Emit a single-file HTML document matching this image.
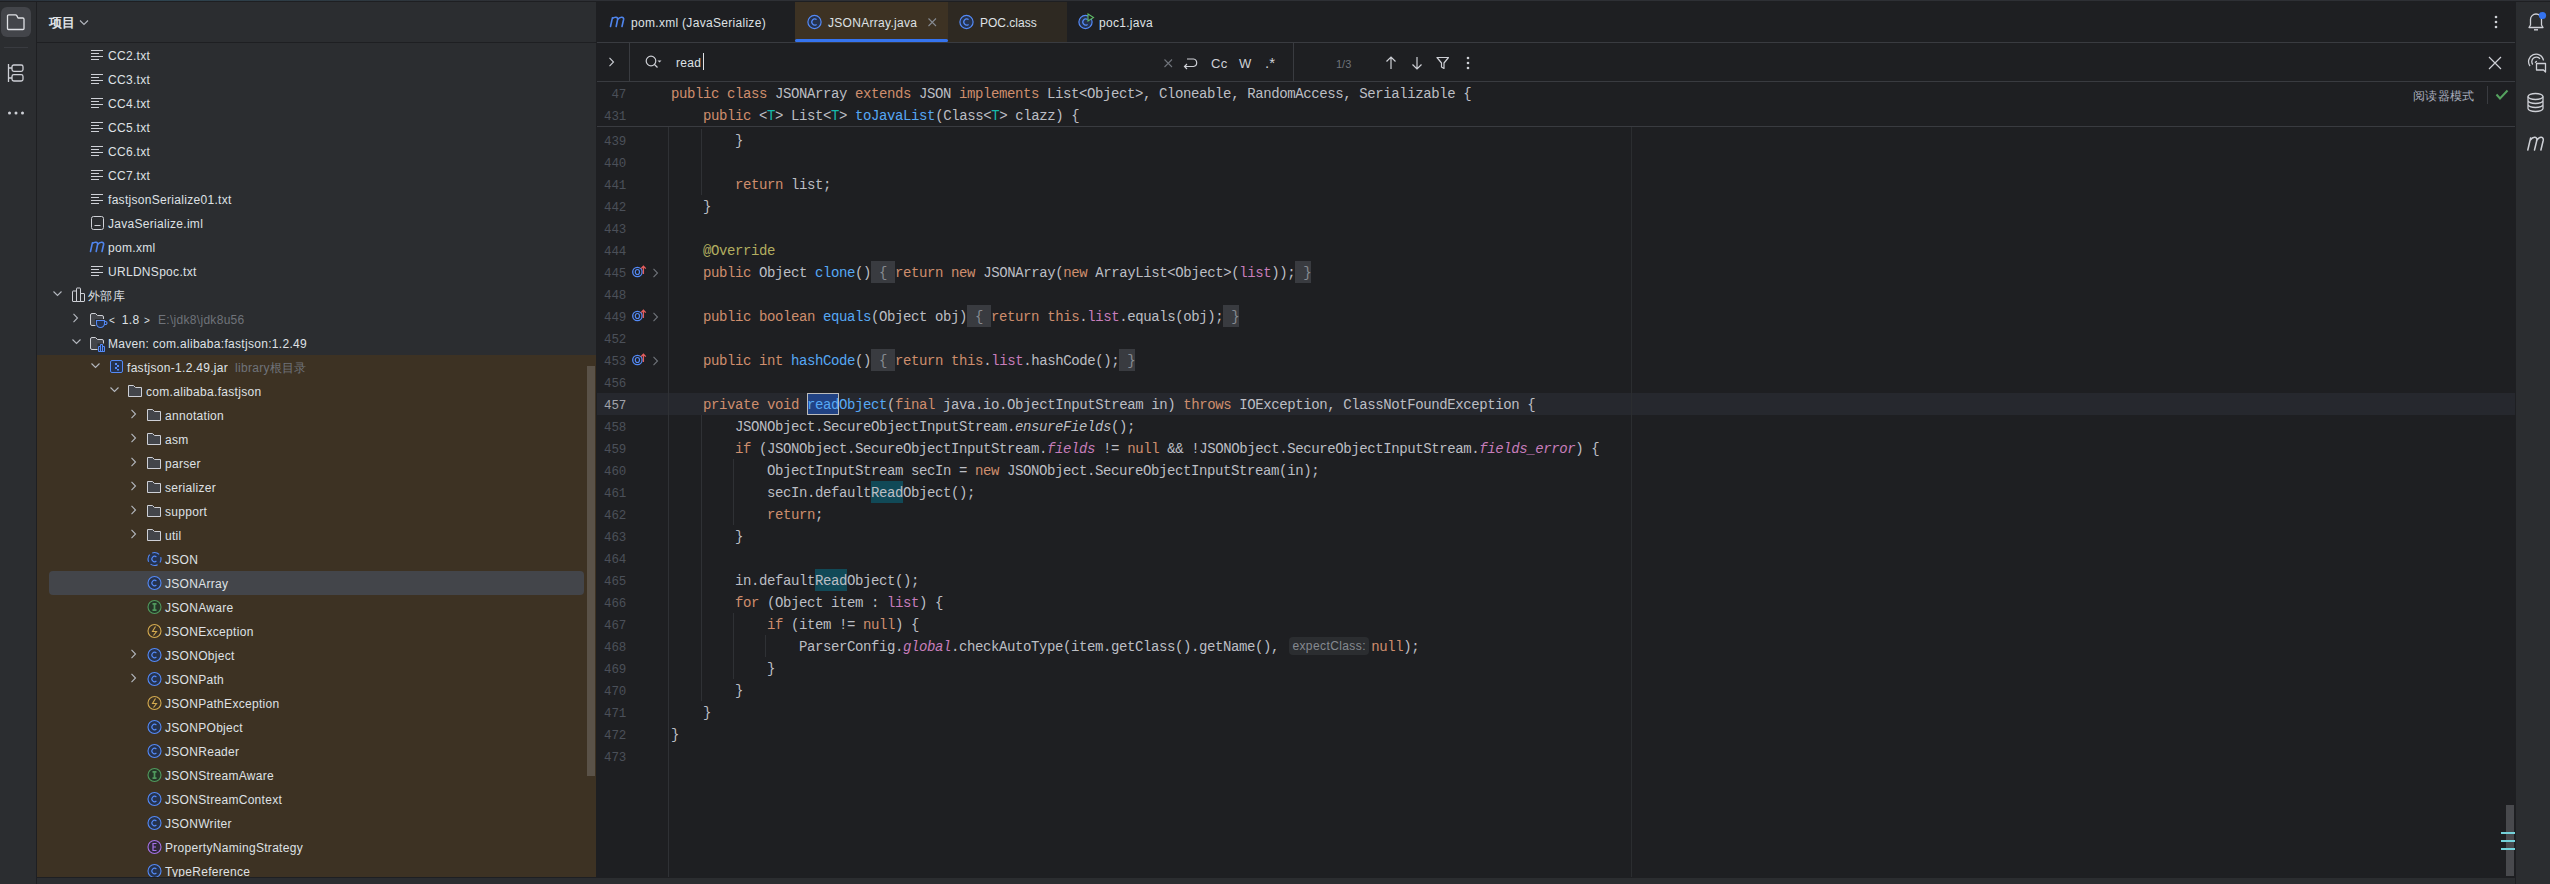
<!DOCTYPE html>
<html><head><meta charset="utf-8">
<style>
*{margin:0;padding:0;box-sizing:border-box}
html,body{width:2550px;height:884px;overflow:hidden;background:#2b2d30}
body{position:relative;font-family:"Liberation Sans",sans-serif;font-size:13px;color:#dfe1e5}
.abs{position:absolute}
.ic{position:absolute;overflow:visible}
.tt{position:absolute;height:24px;line-height:24px;padding-top:1px;white-space:pre;color:#dfe1e5;font-size:12px;letter-spacing:0.3px}
.gray{color:#6f737a}
.mvn{font-family:"Liberation Sans",sans-serif;font-style:italic;font-size:20px;color:#548af7;line-height:20px;letter-spacing:-1px}
.ln{position:absolute;left:586px;width:40px;text-align:right;height:22px;line-height:22px;padding-top:2px;font-family:"Liberation Mono",monospace;font-size:12.5px;letter-spacing:-0.2px;color:#4b5059}
.ln.cur{color:#a1a3ab}
.cl{position:absolute;left:671px;height:22px;line-height:22px;padding-top:1px;font-family:"Liberation Mono",monospace;font-size:14px;letter-spacing:-0.4px;color:#bcbec4;white-space:pre}
.fold{display:inline-block;position:relative;top:-1px;padding-top:1px;background:#393b40;color:#868a91;height:22px;vertical-align:top}
.hint{display:inline-block;position:relative;top:1px;width:80px;text-align:center;background:#2b2d30;color:#868a91;font-family:"Liberation Sans",sans-serif;font-size:12px;letter-spacing:0.4px;height:18px;line-height:18px;border-radius:4px;padding:0;margin:0 2px 0 2px;vertical-align:top}
.m1{display:inline-block;position:relative;top:-1px;padding-top:1px;color:#56a8f5;background:#214283;outline:1px solid #bbbbbb;outline-offset:-1px;height:22px;vertical-align:top}
.m2{display:inline-block;position:relative;top:-1px;padding-top:1px;background:#114957;height:22px;vertical-align:top}
.guide{position:absolute;width:1px;background:#2f3135}
</style></head><body>
<!-- top line -->
<div class="abs" style="left:0;top:0;width:2550px;height:1px;background:linear-gradient(90deg,#2b3038 0%,#2e4450 6%,#2e3035 20%,#2e3035 100%)"></div>
<div class="abs" style="left:0;top:1px;width:2550px;height:1px;background:#1e1f22"></div>

<!-- left strip -->
<div class="abs" style="left:0;top:2px;width:36px;height:882px;background:#2b2d30"></div>
<div class="abs" style="left:36px;top:2px;width:1px;height:882px;background:#1e1f22"></div>
<div class="abs" style="left:1px;top:7px;width:30px;height:30px;border-radius:6px;background:#43454a"></div>
<svg class="ic" style="left:6px;top:13px" width="20" height="18"><path d="M1.5 15.5 V3 Q1.5 1.8 2.7 1.8 H9.5 Q10.3 1.8 10.8 2.6 L12 5 H16.8 Q18 5 18 6.2 V15.5 Q18 16.5 17 16.5 H2.5 Q1.5 16.5 1.5 15.5 Z" fill="none" stroke="#dfe1e5" stroke-width="1.3" stroke-linejoin="round"/></svg>
<div class="abs" style="left:4px;top:47px;width:24px;height:1px;background:#393b40"></div>
<svg class="ic" style="left:7px;top:63px" width="20" height="20"><path d="M1.5 1 V19 M1.5 5 H5 M1.5 15 H5" fill="none" stroke="#ced0d6" stroke-width="1.3"/><rect x="5" y="2" width="11" height="6.3" rx="1.8" fill="none" stroke="#ced0d6" stroke-width="1.3"/><rect x="5" y="11.7" width="11" height="6.3" rx="1.8" fill="none" stroke="#ced0d6" stroke-width="1.3"/></svg>
<svg class="ic" style="left:7px;top:110px" width="20" height="6"><circle cx="2.5" cy="3" r="1.5" fill="#ced0d6"/><circle cx="9" cy="3" r="1.5" fill="#ced0d6"/><circle cx="15.5" cy="3" r="1.5" fill="#ced0d6"/></svg>

<!-- project panel -->
<div class="abs" style="left:37px;top:2px;width:559px;height:40px;background:#2b2d30"></div>
<div class="abs" style="left:49px;top:11px;height:24px;line-height:24px;font-size:13px;color:#dfe1e5;font-weight:bold">项目</div>
<svg class="ic" style="left:79px;top:19px" width="11" height="8"><path d="M1 1.5 L5 5.5 L9 1.5" fill="none" stroke="#b4b8bf" stroke-width="1.1"/></svg>
<div class="abs" style="left:37px;top:42px;width:559px;height:1px;background:#1e1f22"></div>
<div class="abs" style="left:37px;top:43px;width:559px;height:312px;background:#2b2d30"></div>
<div class="abs" style="left:37px;top:355px;width:559px;height:522px;background:#3d3223"></div>
<div class="abs" style="left:49px;top:571px;width:535px;height:24px;border-radius:4px;background:#43454a"></div>
<div class="abs" style="left:587px;top:366px;width:8px;height:410px;background:#5a5248"></div>
<svg class="ic" style="left:91px;top:47px" width="16" height="16"><g stroke="#ced0d6" stroke-width="1"><line x1="0" y1="3.5" x2="12" y2="3.5"/><line x1="0" y1="6.5" x2="8" y2="6.5"/><line x1="0" y1="9.5" x2="12" y2="9.5"/><line x1="0" y1="12.5" x2="8" y2="12.5"/></g></svg><div class="tt" style="left:108px;top:43px">CC2.txt</div><svg class="ic" style="left:91px;top:71px" width="16" height="16"><g stroke="#ced0d6" stroke-width="1"><line x1="0" y1="3.5" x2="12" y2="3.5"/><line x1="0" y1="6.5" x2="8" y2="6.5"/><line x1="0" y1="9.5" x2="12" y2="9.5"/><line x1="0" y1="12.5" x2="8" y2="12.5"/></g></svg><div class="tt" style="left:108px;top:67px">CC3.txt</div><svg class="ic" style="left:91px;top:95px" width="16" height="16"><g stroke="#ced0d6" stroke-width="1"><line x1="0" y1="3.5" x2="12" y2="3.5"/><line x1="0" y1="6.5" x2="8" y2="6.5"/><line x1="0" y1="9.5" x2="12" y2="9.5"/><line x1="0" y1="12.5" x2="8" y2="12.5"/></g></svg><div class="tt" style="left:108px;top:91px">CC4.txt</div><svg class="ic" style="left:91px;top:119px" width="16" height="16"><g stroke="#ced0d6" stroke-width="1"><line x1="0" y1="3.5" x2="12" y2="3.5"/><line x1="0" y1="6.5" x2="8" y2="6.5"/><line x1="0" y1="9.5" x2="12" y2="9.5"/><line x1="0" y1="12.5" x2="8" y2="12.5"/></g></svg><div class="tt" style="left:108px;top:115px">CC5.txt</div><svg class="ic" style="left:91px;top:143px" width="16" height="16"><g stroke="#ced0d6" stroke-width="1"><line x1="0" y1="3.5" x2="12" y2="3.5"/><line x1="0" y1="6.5" x2="8" y2="6.5"/><line x1="0" y1="9.5" x2="12" y2="9.5"/><line x1="0" y1="12.5" x2="8" y2="12.5"/></g></svg><div class="tt" style="left:108px;top:139px">CC6.txt</div><svg class="ic" style="left:91px;top:167px" width="16" height="16"><g stroke="#ced0d6" stroke-width="1"><line x1="0" y1="3.5" x2="12" y2="3.5"/><line x1="0" y1="6.5" x2="8" y2="6.5"/><line x1="0" y1="9.5" x2="12" y2="9.5"/><line x1="0" y1="12.5" x2="8" y2="12.5"/></g></svg><div class="tt" style="left:108px;top:163px">CC7.txt</div><svg class="ic" style="left:91px;top:191px" width="16" height="16"><g stroke="#ced0d6" stroke-width="1"><line x1="0" y1="3.5" x2="12" y2="3.5"/><line x1="0" y1="6.5" x2="8" y2="6.5"/><line x1="0" y1="9.5" x2="12" y2="9.5"/><line x1="0" y1="12.5" x2="8" y2="12.5"/></g></svg><div class="tt" style="left:108px;top:187px">fastjsonSerialize01.txt</div><svg class="ic" style="left:91px;top:215px" width="16" height="16"><rect x="0.5" y="1.5" width="12" height="13" rx="2" fill="none" stroke="#ced0d6"/><line x1="3.5" y1="10.5" x2="9.5" y2="10.5" stroke="#ced0d6"/></svg><div class="tt" style="left:108px;top:211px">JavaSerialize.iml</div><svg class="ic" style="left:89px;top:241px" width="17" height="13"><path d="M1.5 10.5 L3.4 1.8 M3.2 2.8 Q5 1 7 1.2 Q9 1.5 8.6 3.5 L7.2 10.5 M8.6 3.5 Q10.5 1 12.8 1.2 Q15 1.5 14.6 3.5 L13 10.5" fill="none" stroke="#4f85ee" stroke-width="1.6" stroke-linecap="round" stroke-linejoin="round"/></svg><div class="tt" style="left:108px;top:235px">pom.xml</div><svg class="ic" style="left:91px;top:263px" width="16" height="16"><g stroke="#ced0d6" stroke-width="1"><line x1="0" y1="3.5" x2="12" y2="3.5"/><line x1="0" y1="6.5" x2="8" y2="6.5"/><line x1="0" y1="9.5" x2="12" y2="9.5"/><line x1="0" y1="12.5" x2="8" y2="12.5"/></g></svg><div class="tt" style="left:108px;top:259px">URLDNSpoc.txt</div><svg class="ic" style="left:53px;top:290px" width="10" height="8"><path d="M0.5 1.5 L4.5 5.5 L8.5 1.5" fill="none" stroke="#b4b8bf" stroke-width="1.1"/></svg><svg class="ic" style="left:72px;top:287px" width="16" height="16"><path d="M1 14.5 Q0.5 14.5 0.5 14 V4.5 Q0.5 4 1 4 H4.5 V14.5 Z M4.5 14.5 V1.5 Q4.5 1 5 1 H8 Q8.5 1 8.5 1.5 V14.5 Z M8.5 14.5 V6.5 H12 Q12.5 6.5 12.5 7 V14 Q12.5 14.5 12 14.5 Z" fill="none" stroke="#ced0d6"/></svg><div class="tt" style="left:88px;top:283px">外部库</div><svg class="ic" style="left:72px;top:313px" width="8" height="11"><path d="M1.5 0.8 L5.5 5 L1.5 9.2" fill="none" stroke="#b4b8bf" stroke-width="1.1"/></svg><svg class="ic" style="left:90px;top:312px" width="17" height="17"><path d="M2 13.5 Q0.5 13.5 0.5 12 V3 Q0.5 1.5 2 1.5 H5.5 L7.5 3.5 H12 Q13.5 3.5 13.5 5 V12 Q13.5 13.5 12 13.5 Z" fill="#43454a" stroke="#ced0d6" stroke-width="1"/><path d="M6.5 8.5 H14.5 V11.5 A4 4 0 0 1 6.5 11.5 Z" fill="#2b2d30" stroke="#2b2d30" stroke-width="3"/><path d="M6.5 8.5 H14.5 V11.5 A4 4 0 0 1 6.5 11.5 Z" fill="#25324d" stroke="#548af7" stroke-width="1.1"/><path d="M14.5 9.5 H15.5 A1.5 1.5 0 0 1 15.5 12.5 H14" fill="none" stroke="#548af7" stroke-width="1.1"/></svg><div class="tt" style="left:109px;top:307px"><span style="font-size:10px;margin-right:3px">&lt;</span> 1.8 <span style="font-size:10px;margin-left:1px">&gt;</span></div><div class="tt gray" style="left:158px;top:307px">E:\jdk8\jdk8u56</div><svg class="ic" style="left:72px;top:338px" width="10" height="8"><path d="M0.5 1.5 L4.5 5.5 L8.5 1.5" fill="none" stroke="#b4b8bf" stroke-width="1.1"/></svg><svg class="ic" style="left:90px;top:336px" width="17" height="17"><path d="M2 13.5 Q0.5 13.5 0.5 12 V3 Q0.5 1.5 2 1.5 H5.5 L7.5 3.5 H12 Q13.5 3.5 13.5 5 V12 Q13.5 13.5 12 13.5 Z" fill="#43454a" stroke="#ced0d6" stroke-width="1"/><rect x="7.5" y="7.5" width="8" height="9" fill="#2b2d30"/><path d="M8.5 15.5 V10.5 H10.5 V15.5 M10.5 15.5 V8.5 H12.5 V15.5 M12.5 15.5 V10.5 H14.5 V15.5 Z M8.5 15.5 H14.5" fill="#25324d" stroke="#548af7"/></svg><div class="tt" style="left:108px;top:331px">Maven: com.alibaba:fastjson:1.2.49</div><svg class="ic" style="left:91px;top:362px" width="10" height="8"><path d="M0.5 1.5 L4.5 5.5 L8.5 1.5" fill="none" stroke="#b4b8bf" stroke-width="1.1"/></svg><svg class="ic" style="left:110px;top:359px" width="16" height="16"><rect x="0.5" y="1.5" width="12" height="12" rx="1.5" fill="#25324d" stroke="#548af7"/><g fill="#548af7"><rect x="5" y="4" width="2" height="2"/><rect x="7" y="6" width="2" height="2"/><rect x="5" y="8" width="2" height="2"/><rect x="7" y="10" width="2" height="1.5"/></g></svg><div class="tt" style="left:127px;top:355px">fastjson-1.2.49.jar</div><div class="tt gray" style="left:235px;top:355px">library根目录</div><svg class="ic" style="left:110px;top:386px" width="10" height="8"><path d="M0.5 1.5 L4.5 5.5 L8.5 1.5" fill="none" stroke="#b4b8bf" stroke-width="1.1"/></svg><svg class="ic" style="left:128px;top:383px" width="16" height="16"><path d="M0.5 13.5 V2.5 H5.5 L7.5 4.5 H13.5 V13.5 Z" fill="#43454a" stroke="#ced0d6" stroke-linejoin="round"/><line x1="0.5" y1="5.5" x2="13.5" y2="5.5" stroke="#ced0d6" stroke-width="0"/></svg><div class="tt" style="left:146px;top:379px">com.alibaba.fastjson</div><svg class="ic" style="left:130px;top:409px" width="8" height="11"><path d="M1.5 0.8 L5.5 5 L1.5 9.2" fill="none" stroke="#b4b8bf" stroke-width="1.1"/></svg><svg class="ic" style="left:147px;top:407px" width="16" height="16"><path d="M0.5 13.5 V2.5 H5.5 L7.5 4.5 H13.5 V13.5 Z" fill="#43454a" stroke="#ced0d6" stroke-linejoin="round"/><line x1="0.5" y1="5.5" x2="13.5" y2="5.5" stroke="#ced0d6" stroke-width="0"/></svg><div class="tt" style="left:165px;top:403px">annotation</div><svg class="ic" style="left:130px;top:433px" width="8" height="11"><path d="M1.5 0.8 L5.5 5 L1.5 9.2" fill="none" stroke="#b4b8bf" stroke-width="1.1"/></svg><svg class="ic" style="left:147px;top:431px" width="16" height="16"><path d="M0.5 13.5 V2.5 H5.5 L7.5 4.5 H13.5 V13.5 Z" fill="#43454a" stroke="#ced0d6" stroke-linejoin="round"/><line x1="0.5" y1="5.5" x2="13.5" y2="5.5" stroke="#ced0d6" stroke-width="0"/></svg><div class="tt" style="left:165px;top:427px">asm</div><svg class="ic" style="left:130px;top:457px" width="8" height="11"><path d="M1.5 0.8 L5.5 5 L1.5 9.2" fill="none" stroke="#b4b8bf" stroke-width="1.1"/></svg><svg class="ic" style="left:147px;top:455px" width="16" height="16"><path d="M0.5 13.5 V2.5 H5.5 L7.5 4.5 H13.5 V13.5 Z" fill="#43454a" stroke="#ced0d6" stroke-linejoin="round"/><line x1="0.5" y1="5.5" x2="13.5" y2="5.5" stroke="#ced0d6" stroke-width="0"/></svg><div class="tt" style="left:165px;top:451px">parser</div><svg class="ic" style="left:130px;top:481px" width="8" height="11"><path d="M1.5 0.8 L5.5 5 L1.5 9.2" fill="none" stroke="#b4b8bf" stroke-width="1.1"/></svg><svg class="ic" style="left:147px;top:479px" width="16" height="16"><path d="M0.5 13.5 V2.5 H5.5 L7.5 4.5 H13.5 V13.5 Z" fill="#43454a" stroke="#ced0d6" stroke-linejoin="round"/><line x1="0.5" y1="5.5" x2="13.5" y2="5.5" stroke="#ced0d6" stroke-width="0"/></svg><div class="tt" style="left:165px;top:475px">serializer</div><svg class="ic" style="left:130px;top:505px" width="8" height="11"><path d="M1.5 0.8 L5.5 5 L1.5 9.2" fill="none" stroke="#b4b8bf" stroke-width="1.1"/></svg><svg class="ic" style="left:147px;top:503px" width="16" height="16"><path d="M0.5 13.5 V2.5 H5.5 L7.5 4.5 H13.5 V13.5 Z" fill="#43454a" stroke="#ced0d6" stroke-linejoin="round"/><line x1="0.5" y1="5.5" x2="13.5" y2="5.5" stroke="#ced0d6" stroke-width="0"/></svg><div class="tt" style="left:165px;top:499px">support</div><svg class="ic" style="left:130px;top:529px" width="8" height="11"><path d="M1.5 0.8 L5.5 5 L1.5 9.2" fill="none" stroke="#b4b8bf" stroke-width="1.1"/></svg><svg class="ic" style="left:147px;top:527px" width="16" height="16"><path d="M0.5 13.5 V2.5 H5.5 L7.5 4.5 H13.5 V13.5 Z" fill="#43454a" stroke="#ced0d6" stroke-linejoin="round"/><line x1="0.5" y1="5.5" x2="13.5" y2="5.5" stroke="#ced0d6" stroke-width="0"/></svg><div class="tt" style="left:165px;top:523px">util</div><svg class="ic" style="left:147px;top:551px" width="16" height="16"><circle cx="7.5" cy="8" r="6.5" fill="#25324d" stroke="#548af7" stroke-width="1.1" stroke-dasharray="7.4 3" stroke-dashoffset="3.7"/><path d="M9.4 6 A2.7 2.7 0 1 0 9.4 10" fill="none" stroke="#548af7" stroke-width="1.1"/></svg><div class="tt" style="left:165px;top:547px">JSON</div><svg class="ic" style="left:147px;top:575px" width="16" height="16"><circle cx="7.5" cy="8" r="6.5" fill="#25324d" stroke="#548af7" stroke-width="1.1"/><path d="M9.4 6 A2.7 2.7 0 1 0 9.4 10" fill="none" stroke="#548af7" stroke-width="1.1"/></svg><div class="tt" style="left:165px;top:571px">JSONArray</div><svg class="ic" style="left:147px;top:599px" width="16" height="16"><circle cx="7.5" cy="8" r="6.5" fill="#253627" stroke="#509a5d" stroke-width="1.1"/><path d="M5.5 4.8 H9.5 M7.5 4.8 V11.2 M5.5 11.2 H9.5" fill="none" stroke="#509a5d" stroke-width="1.7"/></svg><div class="tt" style="left:165px;top:595px">JSONAware</div><svg class="ic" style="left:147px;top:623px" width="16" height="16"><circle cx="7.5" cy="8" r="6.5" fill="none" stroke="#d4aa4f" stroke-width="1.1"/><path d="M8.5 3.5 L5.5 8.5 H9.5 L6.5 12.5" fill="none" stroke="#d4aa4f" stroke-width="1.1"/></svg><div class="tt" style="left:165px;top:619px">JSONException</div><svg class="ic" style="left:130px;top:649px" width="8" height="11"><path d="M1.5 0.8 L5.5 5 L1.5 9.2" fill="none" stroke="#b4b8bf" stroke-width="1.1"/></svg><svg class="ic" style="left:147px;top:647px" width="16" height="16"><circle cx="7.5" cy="8" r="6.5" fill="#25324d" stroke="#548af7" stroke-width="1.1"/><path d="M9.4 6 A2.7 2.7 0 1 0 9.4 10" fill="none" stroke="#548af7" stroke-width="1.1"/></svg><div class="tt" style="left:165px;top:643px">JSONObject</div><svg class="ic" style="left:130px;top:673px" width="8" height="11"><path d="M1.5 0.8 L5.5 5 L1.5 9.2" fill="none" stroke="#b4b8bf" stroke-width="1.1"/></svg><svg class="ic" style="left:147px;top:671px" width="16" height="16"><circle cx="7.5" cy="8" r="6.5" fill="#25324d" stroke="#548af7" stroke-width="1.1"/><path d="M9.4 6 A2.7 2.7 0 1 0 9.4 10" fill="none" stroke="#548af7" stroke-width="1.1"/></svg><div class="tt" style="left:165px;top:667px">JSONPath</div><svg class="ic" style="left:147px;top:695px" width="16" height="16"><circle cx="7.5" cy="8" r="6.5" fill="none" stroke="#d4aa4f" stroke-width="1.1"/><path d="M8.5 3.5 L5.5 8.5 H9.5 L6.5 12.5" fill="none" stroke="#d4aa4f" stroke-width="1.1"/></svg><div class="tt" style="left:165px;top:691px">JSONPathException</div><svg class="ic" style="left:147px;top:719px" width="16" height="16"><circle cx="7.5" cy="8" r="6.5" fill="#25324d" stroke="#548af7" stroke-width="1.1"/><path d="M9.4 6 A2.7 2.7 0 1 0 9.4 10" fill="none" stroke="#548af7" stroke-width="1.1"/></svg><div class="tt" style="left:165px;top:715px">JSONPObject</div><svg class="ic" style="left:147px;top:743px" width="16" height="16"><circle cx="7.5" cy="8" r="6.5" fill="#25324d" stroke="#548af7" stroke-width="1.1"/><path d="M9.4 6 A2.7 2.7 0 1 0 9.4 10" fill="none" stroke="#548af7" stroke-width="1.1"/></svg><div class="tt" style="left:165px;top:739px">JSONReader</div><svg class="ic" style="left:147px;top:767px" width="16" height="16"><circle cx="7.5" cy="8" r="6.5" fill="#253627" stroke="#509a5d" stroke-width="1.1"/><path d="M5.5 4.8 H9.5 M7.5 4.8 V11.2 M5.5 11.2 H9.5" fill="none" stroke="#509a5d" stroke-width="1.7"/></svg><div class="tt" style="left:165px;top:763px">JSONStreamAware</div><svg class="ic" style="left:147px;top:791px" width="16" height="16"><circle cx="7.5" cy="8" r="6.5" fill="#25324d" stroke="#548af7" stroke-width="1.1"/><path d="M9.4 6 A2.7 2.7 0 1 0 9.4 10" fill="none" stroke="#548af7" stroke-width="1.1"/></svg><div class="tt" style="left:165px;top:787px">JSONStreamContext</div><svg class="ic" style="left:147px;top:815px" width="16" height="16"><circle cx="7.5" cy="8" r="6.5" fill="#25324d" stroke="#548af7" stroke-width="1.1"/><path d="M9.4 6 A2.7 2.7 0 1 0 9.4 10" fill="none" stroke="#548af7" stroke-width="1.1"/></svg><div class="tt" style="left:165px;top:811px">JSONWriter</div><svg class="ic" style="left:147px;top:839px" width="16" height="16"><circle cx="7.5" cy="8" r="6.5" fill="#2f2838" stroke="#a571e6" stroke-width="1.1"/><path d="M9.5 4.5 H6 V11.5 H9.5 M6 8 H9" fill="none" stroke="#a571e6" stroke-width="1.2"/></svg><div class="tt" style="left:165px;top:835px">PropertyNamingStrategy</div><svg class="ic" style="left:147px;top:863px" width="16" height="16"><circle cx="7.5" cy="8" r="6.5" fill="#25324d" stroke="#548af7" stroke-width="1.1"/><path d="M9.4 6 A2.7 2.7 0 1 0 9.4 10" fill="none" stroke="#548af7" stroke-width="1.1"/></svg><div class="tt" style="left:165px;top:859px">TypeReference</div>
<div class="abs" style="left:37px;top:877px;width:2479px;height:1px;background:#1e1f22"></div>
<div class="abs" style="left:37px;top:878px;width:2479px;height:6px;background:#2b2d30"></div>
<div class="abs" style="left:596px;top:2px;width:1px;height:876px;background:#1e1f22"></div>

<!-- editor -->
<div class="abs" style="left:597px;top:2px;width:1919px;height:875px;background:#1e1f22"></div>
<!-- tabs -->
<div class="abs" style="left:795px;top:2px;width:153px;height:40px;background:#3d3223"></div>
<div class="abs" style="left:948px;top:2px;width:119px;height:40px;background:#2e2922"></div>
<div class="abs" style="left:795px;top:39px;width:153px;height:3px;border-radius:2px;background:#3574f0"></div>
<div class="abs" style="left:597px;top:42px;width:1919px;height:1px;background:#393b40"></div>
<svg class="ic" style="left:609px;top:16px" width="17" height="13"><path d="M1.5 10.5 L3.4 1.8 M3.2 2.8 Q5 1 7 1.2 Q9 1.5 8.6 3.5 L7.2 10.5 M8.6 3.5 Q10.5 1 12.8 1.2 Q15 1.5 14.6 3.5 L13 10.5" fill="none" stroke="#4f85ee" stroke-width="1.6" stroke-linecap="round" stroke-linejoin="round"/></svg>
<div class="tt" style="left:631px;top:10px">pom.xml (JavaSerialize)</div>
<svg class="ic" style="left:807px;top:14px" width="16" height="16"><circle cx="7.5" cy="8" r="6.6" fill="#25324d" stroke="#548af7" stroke-width="1.2"/><path d="M9.6 5.6 A3 3 0 1 0 9.6 10.4" fill="none" stroke="#548af7" stroke-width="1.2"/></svg>
<div class="tt" style="left:828px;top:10px">JSONArray.java</div>
<svg class="ic" style="left:928px;top:18px" width="9" height="9"><path d="M0.5 0.5 L8 8 M8 0.5 L0.5 8" stroke="#868a91" stroke-width="1.1"/></svg>
<svg class="ic" style="left:959px;top:14px" width="16" height="16"><circle cx="7.5" cy="8" r="6.6" fill="#25324d" stroke="#548af7" stroke-width="1.2"/><path d="M9.6 5.6 A3 3 0 1 0 9.6 10.4" fill="none" stroke="#548af7" stroke-width="1.2"/></svg>
<div class="tt" style="left:980px;top:10px;letter-spacing:0">POC.class</div>
<svg class="ic" style="left:1078px;top:13px" width="18" height="17"><circle cx="7.5" cy="9" r="6.6" fill="#25324d" stroke="#548af7" stroke-width="1.2"/><path d="M9.6 6.6 A3 3 0 1 0 9.6 11.4" fill="none" stroke="#548af7" stroke-width="1.2"/><path d="M10 1 L15.5 4.5 L10 8 Z" fill="#1e1f22" stroke="#5fb865" stroke-width="1.1"/></svg>
<div class="tt" style="left:1099px;top:10px">poc1.java</div>
<svg class="ic" style="left:2494px;top:15px" width="4" height="14"><circle cx="2" cy="2" r="1.3" fill="#ced0d6"/><circle cx="2" cy="7" r="1.3" fill="#ced0d6"/><circle cx="2" cy="12" r="1.3" fill="#ced0d6"/></svg>

<!-- find bar -->
<svg class="ic" style="left:608px;top:57px" width="8" height="11"><path d="M1.5 0.8 L5.5 5 L1.5 9.2" fill="none" stroke="#ced0d6" stroke-width="1.1"/></svg>
<div class="abs" style="left:629px;top:43px;width:1px;height:38px;background:#393b40"></div>
<svg class="ic" style="left:645px;top:55px" width="18" height="15"><circle cx="6" cy="6" r="4.8" fill="none" stroke="#ced0d6" stroke-width="1.2"/><path d="M9.5 9.5 L12.5 12.5" stroke="#ced0d6" stroke-width="1.2"/><path d="M12.5 5.5 H16.5 L14.5 7.5 Z" fill="#ced0d6"/></svg>
<div class="tt" style="left:676px;top:50px;color:#dfe1e5">read</div>
<div class="abs" style="left:703px;top:53px;width:1px;height:17px;background:#dfe1e5"></div>
<svg class="ic" style="left:1164px;top:59px" width="9" height="9"><path d="M0.5 0.5 L8 8 M8 0.5 L0.5 8" stroke="#6f737a" stroke-width="1.1"/></svg>
<svg class="ic" style="left:1183px;top:56px" width="16" height="15"><path d="M4 13 L1.5 10.5 L4 8 M1.5 10.5 H10.5 A3.8 3.8 0 0 0 10.5 3 H4" fill="none" stroke="#ced0d6" stroke-width="1.2"/></svg>
<div class="tt" style="left:1211px;top:51px;font-size:13px;color:#ced0d6">Cc</div>
<div class="tt" style="left:1239px;top:51px;font-size:13px;color:#ced0d6">W</div>
<div class="tt" style="left:1265px;top:50px;font-size:15px;letter-spacing:0;color:#ced0d6">.*</div>
<div class="abs" style="left:1293px;top:43px;width:1px;height:38px;background:#393b40"></div>
<div class="tt" style="left:1336px;top:51px;font-size:11px;letter-spacing:0;color:#6f737a">1/3</div>
<svg class="ic" style="left:1385px;top:56px" width="12" height="14"><path d="M6 1 V13 M1.5 5.5 L6 1 L10.5 5.5" fill="none" stroke="#ced0d6" stroke-width="1.2"/></svg>
<svg class="ic" style="left:1411px;top:56px" width="12" height="14"><path d="M6 1 V13 M1.5 8.5 L6 13 L10.5 8.5" fill="none" stroke="#ced0d6" stroke-width="1.2"/></svg>
<svg class="ic" style="left:1436px;top:56px" width="14" height="14"><path d="M1 1.5 H12.5 L8 7 V12.5 L5.5 11 V7 Z" fill="none" stroke="#ced0d6" stroke-width="1.2" stroke-linejoin="round"/></svg>
<svg class="ic" style="left:1466px;top:56px" width="4" height="14"><circle cx="2" cy="2" r="1.3" fill="#ced0d6"/><circle cx="2" cy="7" r="1.3" fill="#ced0d6"/><circle cx="2" cy="12" r="1.3" fill="#ced0d6"/></svg>
<svg class="ic" style="left:2488px;top:56px" width="14" height="14"><path d="M1 1 L13 13 M13 1 L1 13" stroke="#ced0d6" stroke-width="1.2"/></svg>
<div class="abs" style="left:597px;top:81px;width:1919px;height:1px;background:#393b40"></div>

<!-- sticky border -->
<div class="abs" style="left:597px;top:126px;width:1919px;height:1px;background:#393b40"></div>

<!-- current line -->
<div class="abs" style="left:597px;top:393px;width:1919px;height:22px;background:#26282e"></div>
<!-- right margin -->
<div class="abs" style="left:1631px;top:127px;width:1px;height:750px;background:#2b2d30"></div>
<div class="guide" style="left:668px;top:127px;height:750px"></div><div class="guide" style="left:701px;top:129px;height:66px"></div><div class="guide" style="left:701px;top:415px;height:286px"></div><div class="guide" style="left:733px;top:459px;height:66px"></div><div class="guide" style="left:733px;top:613px;height:66px"></div><div class="guide" style="left:765px;top:635px;height:22px"></div>
<div class="ln" style="top:82px">47</div><div class="cl" style="top:82px"><span style="color:#cf8e6d;">public </span><span style="color:#cf8e6d;">class </span>JSONArray <span style="color:#cf8e6d;">extends </span>JSON <span style="color:#cf8e6d;">implements </span>List&lt;Object&gt;, Cloneable, RandomAccess, Serializable {</div><div class="ln" style="top:104px">431</div><div class="cl" style="top:104px">    <span style="color:#cf8e6d;">public </span>&lt;<span style="color:#16baac;">T</span>&gt; List&lt;<span style="color:#16baac;">T</span>&gt; <span style="color:#56a8f5;">toJavaList</span>(Class&lt;<span style="color:#16baac;">T</span>&gt; clazz) {</div><div class="ln" style="top:129px">439</div><div class="cl" style="top:129px">        }</div><div class="ln" style="top:151px">440</div><div class="cl" style="top:151px"></div><div class="ln" style="top:173px">441</div><div class="cl" style="top:173px">        <span style="color:#cf8e6d;">return </span>list;</div><div class="ln" style="top:195px">442</div><div class="cl" style="top:195px">    }</div><div class="ln" style="top:217px">443</div><div class="cl" style="top:217px"></div><div class="ln" style="top:239px">444</div><div class="cl" style="top:239px">    <span style="color:#b3ae60;">@Override</span></div><div class="ln" style="top:261px">445</div><div class="cl" style="top:261px">    <span style="color:#cf8e6d;">public </span>Object <span style="color:#56a8f5;">clone</span>()<span class="fold"> { </span><span style="color:#cf8e6d;">return </span><span style="color:#cf8e6d;">new </span>JSONArray(<span style="color:#cf8e6d;">new </span>ArrayList&lt;Object&gt;(<span style="color:#c77dbb;">list</span>));<span class="fold"> }</span></div><div class="ln" style="top:283px">448</div><div class="cl" style="top:283px"></div><div class="ln" style="top:305px">449</div><div class="cl" style="top:305px">    <span style="color:#cf8e6d;">public </span><span style="color:#cf8e6d;">boolean </span><span style="color:#56a8f5;">equals</span>(Object obj)<span class="fold"> { </span><span style="color:#cf8e6d;">return </span><span style="color:#cf8e6d;">this</span>.<span style="color:#c77dbb;">list</span>.equals(obj);<span class="fold"> }</span></div><div class="ln" style="top:327px">452</div><div class="cl" style="top:327px"></div><div class="ln" style="top:349px">453</div><div class="cl" style="top:349px">    <span style="color:#cf8e6d;">public </span><span style="color:#cf8e6d;">int </span><span style="color:#56a8f5;">hashCode</span>()<span class="fold"> { </span><span style="color:#cf8e6d;">return </span><span style="color:#cf8e6d;">this</span>.<span style="color:#c77dbb;">list</span>.hashCode();<span class="fold"> }</span></div><div class="ln" style="top:371px">456</div><div class="cl" style="top:371px"></div><div class="ln cur" style="top:393px">457</div><div class="cl" style="top:393px">    <span style="color:#cf8e6d;">private </span><span style="color:#cf8e6d;">void </span><span class="m1">read</span><span style="color:#56a8f5;">Object</span>(<span style="color:#cf8e6d;">final </span>java.io.ObjectInputStream in) <span style="color:#cf8e6d;">throws </span>IOException, ClassNotFoundException {</div><div class="ln" style="top:415px">458</div><div class="cl" style="top:415px">        JSONObject.SecureObjectInputStream.<span style="font-style:italic;">ensureFields</span>();</div><div class="ln" style="top:437px">459</div><div class="cl" style="top:437px">        <span style="color:#cf8e6d;">if </span>(JSONObject.SecureObjectInputStream.<span style="color:#c77dbb;font-style:italic;">fields</span> != <span style="color:#cf8e6d;">null </span>&amp;&amp; !JSONObject.SecureObjectInputStream.<span style="color:#c77dbb;font-style:italic;">fields_error</span>) {</div><div class="ln" style="top:459px">460</div><div class="cl" style="top:459px">            ObjectInputStream secIn = <span style="color:#cf8e6d;">new </span>JSONObject.SecureObjectInputStream(in);</div><div class="ln" style="top:481px">461</div><div class="cl" style="top:481px">            secIn.default<span class="m2">Read</span>Object();</div><div class="ln" style="top:503px">462</div><div class="cl" style="top:503px">            <span style="color:#cf8e6d;">return</span>;</div><div class="ln" style="top:525px">463</div><div class="cl" style="top:525px">        }</div><div class="ln" style="top:547px">464</div><div class="cl" style="top:547px"></div><div class="ln" style="top:569px">465</div><div class="cl" style="top:569px">        in.default<span class="m2">Read</span>Object();</div><div class="ln" style="top:591px">466</div><div class="cl" style="top:591px">        <span style="color:#cf8e6d;">for </span>(Object item : <span style="color:#c77dbb;">list</span>) {</div><div class="ln" style="top:613px">467</div><div class="cl" style="top:613px">            <span style="color:#cf8e6d;">if </span>(item != <span style="color:#cf8e6d;">null</span>) {</div><div class="ln" style="top:635px">468</div><div class="cl" style="top:635px">                ParserConfig.<span style="color:#c77dbb;font-style:italic;">global</span>.checkAutoType(item.getClass().getName(), <span class="hint">expectClass:</span><span style="color:#cf8e6d;">null</span>);</div><div class="ln" style="top:657px">469</div><div class="cl" style="top:657px">            }</div><div class="ln" style="top:679px">470</div><div class="cl" style="top:679px">        }</div><div class="ln" style="top:701px">471</div><div class="cl" style="top:701px">    }</div><div class="ln" style="top:723px">472</div><div class="cl" style="top:723px">}</div><div class="ln" style="top:745px">473</div><div class="cl" style="top:745px"></div>
<svg class="ic" style="left:631px;top:264px" width="18" height="16"><circle cx="6.4" cy="8" r="4.7" fill="none" stroke="#548af7" stroke-width="1.3"/><ellipse cx="6.4" cy="8" rx="2.1" ry="2.5" fill="none" stroke="#548af7" stroke-width="1.2"/><path d="M12.4 10 V2.2 M10 4.6 L12.4 2.2 L14.8 4.6" fill="none" stroke="#e35d5d" stroke-width="1.3"/></svg><svg class="ic" style="left:652px;top:268px" width="8" height="11"><path d="M1.5 0.8 L5.5 5 L1.5 9.2" fill="none" stroke="#6f737a" stroke-width="1.1"/></svg><svg class="ic" style="left:631px;top:308px" width="18" height="16"><circle cx="6.4" cy="8" r="4.7" fill="none" stroke="#548af7" stroke-width="1.3"/><ellipse cx="6.4" cy="8" rx="2.1" ry="2.5" fill="none" stroke="#548af7" stroke-width="1.2"/><path d="M12.4 10 V2.2 M10 4.6 L12.4 2.2 L14.8 4.6" fill="none" stroke="#e35d5d" stroke-width="1.3"/></svg><svg class="ic" style="left:652px;top:312px" width="8" height="11"><path d="M1.5 0.8 L5.5 5 L1.5 9.2" fill="none" stroke="#6f737a" stroke-width="1.1"/></svg><svg class="ic" style="left:631px;top:352px" width="18" height="16"><circle cx="6.4" cy="8" r="4.7" fill="none" stroke="#548af7" stroke-width="1.3"/><ellipse cx="6.4" cy="8" rx="2.1" ry="2.5" fill="none" stroke="#548af7" stroke-width="1.2"/><path d="M12.4 10 V2.2 M10 4.6 L12.4 2.2 L14.8 4.6" fill="none" stroke="#e35d5d" stroke-width="1.3"/></svg><svg class="ic" style="left:652px;top:356px" width="8" height="11"><path d="M1.5 0.8 L5.5 5 L1.5 9.2" fill="none" stroke="#6f737a" stroke-width="1.1"/></svg>

<!-- reader mode -->
<div class="tt" style="left:2413px;top:83px;font-size:12px;color:#a8adbd">阅读器模式</div>
<div class="abs" style="left:2487px;top:86px;width:1px;height:18px;background:#393b40"></div>
<svg class="ic" style="left:2495px;top:89px" width="14" height="12"><path d="M1.5 5.5 L5 9.5 L12.5 1.5" fill="none" stroke="#55a25f" stroke-width="2"/></svg>

<!-- editor scrollbar -->
<div class="abs" style="left:2506px;top:805px;width:8px;height:71px;background:#48494d"></div>
<div class="abs" style="left:2501px;top:832px;width:14px;height:2px;background:#74d2da"></div>
<div class="abs" style="left:2501px;top:840px;width:14px;height:2px;background:#74d2da"></div>
<div class="abs" style="left:2501px;top:848px;width:14px;height:2px;background:#74d2da"></div>

<!-- right strip -->
<div class="abs" style="left:2515px;top:2px;width:1px;height:882px;background:#1e1f22"></div>
<div class="abs" style="left:2516px;top:2px;width:34px;height:882px;background:#2b2d30"></div>
<svg class="ic" style="left:2527px;top:11px" width="22" height="22"><path d="M2 16.5 H16 L14.5 14 V8.5 A5.5 5.5 0 0 0 3.5 8.5 V14 Z" fill="none" stroke="#ced0d6" stroke-width="1.3" stroke-linejoin="round"/><path d="M7 18.8 H11" stroke="#ced0d6" stroke-width="1.4"/><circle cx="15.5" cy="4.5" r="3.6" fill="#3574f0"/></svg>
<svg class="ic" style="left:2527px;top:53px" width="22" height="22"><path d="M3 13 A7.5 7.5 0 1 1 16.5 7.5 M5.8 11.5 A4.5 4.5 0 0 1 13 5.8 M8.3 9.8 A1.5 1.5 0 0 1 10 8.5" fill="none" stroke="#ced0d6" stroke-width="1.3"/><path d="M9.5 10.5 H18.5 V19 L16.5 17 H9.5 Z" fill="#2b2d30" stroke="#ced0d6" stroke-width="1.3" stroke-linejoin="round"/></svg>
<svg class="ic" style="left:2527px;top:92px" width="20" height="22"><ellipse cx="8.5" cy="4.5" rx="7.5" ry="3" fill="none" stroke="#ced0d6" stroke-width="1.3"/><path d="M1 4.5 V16.5 A7.5 3 0 0 0 16 16.5 V4.5 M1 8.5 A7.5 3 0 0 0 16 8.5 M1 12.5 A7.5 3 0 0 0 16 12.5" fill="none" stroke="#ced0d6" stroke-width="1.3"/></svg>
<svg class="ic" style="left:2526px;top:132px" width="21" height="20"><path d="M1.8 18 L4.6 6 M4.2 8.2 Q6.5 5 9 5.3 Q11.3 5.7 10.8 8.5 L8.5 18 M10.6 8.5 Q12.8 5 15.4 5.3 Q17.7 5.7 17.2 8.5 L14.9 18" fill="none" stroke="#ced0d6" stroke-width="1.5" stroke-linecap="round" stroke-linejoin="round"/></svg>
</body></html>
